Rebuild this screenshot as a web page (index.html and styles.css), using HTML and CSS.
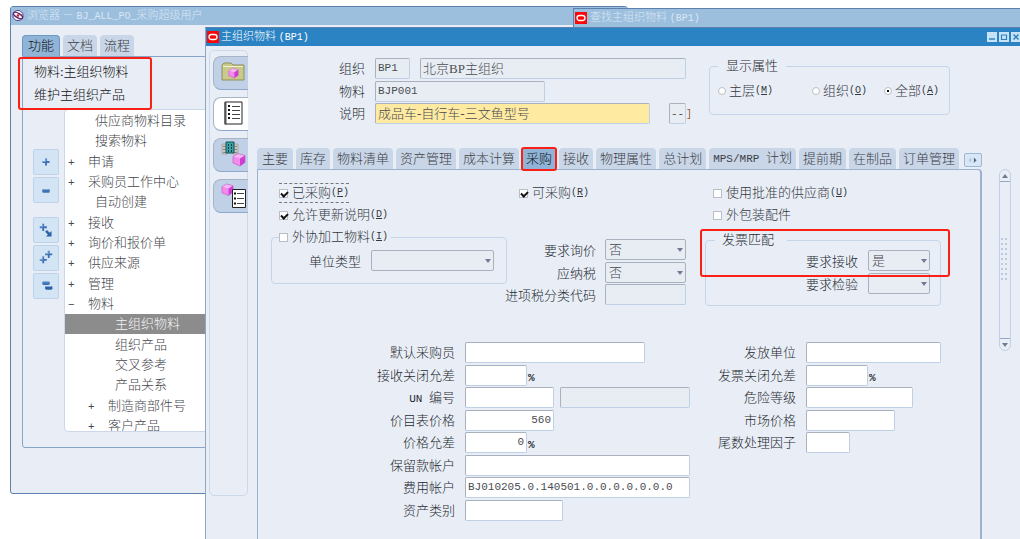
FILE: index.html
```html
<!DOCTYPE html>
<html lang="zh-CN">
<head>
<meta charset="utf-8">
<title>主组织物料 (BP1)</title>
<link rel="stylesheet" href="styles.css">
</head>
<body>
<svg class="defs" aria-hidden="true">
  <defs>
    <symbol id="cube" viewBox="0 0 14 14"><path d="M1 4 6 1l7 2-5 3z" fill="#fbb4f6"/><path d="M1 4l7 2v7.500L1 10.500z" fill="#f58aee"/><path d="M8 6l5-3v7l-5 3.500z" fill="#d03cd4"/><path d="M1 4 6 1l7 2v7l-5 3.500L1 10.500z" fill="none" stroke="#c050c4" stroke-width=".6"/></symbol>
    <symbol id="plus" viewBox="0 0 8 8"><path d="M3 0h2v3h3v2H5v3H3V5H0V3h3z" fill="#3f70b5"/><path d="M3.500 .5v3h-3" fill="none" stroke="#7da8dc"/></symbol>
    <symbol id="oracle" viewBox="0 0 12 12"><path d="M0 0h12v12H0z" fill="#f80808"/><rect x="2" y="3.500" width="8" height="5" rx="2.500" fill="none" stroke="#fff" stroke-width="1.300"/></symbol>
  </defs>
</svg>
<div class="desktop">
  <section class="window nav-window">
    <header class="title muted">
      <svg class="logo round" viewBox="0 0 13 13"><circle cx="6.500" cy="6" r="5.500" fill="#fff" stroke="#4a3a80"/><ellipse cx="6.500" cy="6" rx="5.500" ry="2.400" transform="rotate(30 6.500 6)" fill="none" stroke="#64246c" stroke-width="1.500"/><circle cx="6.500" cy="6" r="1.400" fill="#c22"/></svg>
      <span>浏览器 － <span class="en">BJ_ALL_PO_</span>采购超级用户</span>
    </header>
    <div class="nav-body">
      <div class="tabs nav-tabs"><button class="tab active">功能</button><button class="tab">文档</button><button class="tab">流程</button></div>
      <div class="nav-panel">
        <div class="nav-heading"><div>物料:主组织物料</div><div>维护主组织产品</div><i class="mark mark-nav"></i></div>
        <div class="nav-main">
          <div class="tools">
            <button class="tool" aria-label="展开"><svg viewBox="0 0 26 26"><use href="#plus" x="9" y="9" width="8" height="8"/></svg></button>
            <button class="tool" aria-label="折叠"><svg viewBox="0 0 26 26"><rect x="9" y="12" width="8" height="4" rx="1" fill="#3f70b5"/><path d="M10 12.500h6" stroke="#8db4e0"/></svg></button>
            <button class="tool apart" aria-label="展开分支"><svg viewBox="0 0 26 26"><use href="#plus" x="6" y="6" width="8" height="8"/><path d="M14 13l3 3 2-2v6h-6l2-2-3-3z" fill="#2f61a8"/></svg></button>
            <button class="tool" aria-label="全部展开"><svg viewBox="0 0 26 26"><use href="#plus" x="6" y="11" width="8" height="8"/><use href="#plus" x="12" y="5" width="8" height="8"/></svg></button>
            <button class="tool" aria-label="全部折叠"><svg viewBox="0 0 26 26"><rect x="9" y="8" width="8" height="4" rx="1.500" fill="#3f70b5"/><rect x="12" y="13" width="8" height="4" rx="1.500" fill="#2f61a8"/><path d="M10 8.500h6M13 13.500h6" stroke="#8db4e0"/></svg></button>
          </div>
          <ul class="tree">
            <li class="leaf">供应商物料目录</li>
            <li class="leaf">搜索物料</li>
            <li><b>+</b>申请</li>
            <li><b>+</b>采购员工作中心</li>
            <li class="leaf">自动创建</li>
            <li><b>+</b>接收</li>
            <li><b>+</b>询价和报价单</li>
            <li><b>+</b>供应来源</li>
            <li><b>+</b>管理</li>
            <li><b>−</b>物料</li>
            <li class="deep selected">主组织物料</li>
            <li class="deep">组织产品</li>
            <li class="deep">交叉参考</li>
            <li class="deep">产品关系</li>
            <li class="nested"><b>+</b>制造商部件号</li>
            <li class="nested"><b>+</b>客户产品</li>
          </ul>
        </div>
      </div>
    </div>
  </section>

  <section class="window find-window">
    <header class="title muted"><svg class="logo" viewBox="0 0 12 12"><use href="#oracle"/></svg><span>查找主组织物料 <span class="en">(BP1)</span></span></header>
  </section>

  <section class="window main-window">
    <header class="title">
      <svg class="logo" viewBox="0 0 12 12"><use href="#oracle"/></svg><span class="caption">主组织物料 <span class="en">(BP1)</span></span>
      <button class="win" aria-label="最小化"><svg viewBox="0 0 10 10"><path d="M2 7h6" stroke="#2c83c4" stroke-width="1.500"/></svg></button>
      <button class="win" aria-label="最大化"><svg viewBox="0 0 10 10"><path d="M2.500 3h5v4.500h-5z" fill="none" stroke="#2c83c4" stroke-width="1.200"/></svg></button>
      <button class="win" aria-label="关闭"><svg viewBox="0 0 10 10"><path d="M2.500 2.500l5 5m0-5l-5 5" stroke="#2c83c4" stroke-width="1.500"/></svg></button>
    </header>
    <div class="main-body">
      <nav class="rail">
        <button class="rail-tab" aria-label="物料文件夹"><svg viewBox="0 0 34 34"><path d="M8 9l2-2h7l2 2h11v15H8z" fill="#c9c98e" stroke="#8f8f58"/><path d="M9 10.500h20" stroke="#f0f0c8"/><use href="#cube" x="14" y="11" width="11" height="12"/></svg></button>
        <button class="rail-tab on" aria-label="列表"><svg viewBox="0 0 34 34"><path d="M11 5h17v22H11z" fill="#fff" stroke="#222"/><path d="M11.500 5v22.500" fill="none" stroke="#555" stroke-width="2"/><path d="M14 9.500h2m-2 4h2m-2 4h2m-2 4h2" transform="translate(0 0)" fill="none"/><path d="M14 9h2M14 13h2M14 17h2M14 21h2" stroke="#111" stroke-width="2"/><path d="M18 9.500h8M18 13.500h8M18 17.500h8M18 21.500h8" stroke="#444"/></svg></button>
        <button class="rail-tab" aria-label="组织物料"><svg viewBox="0 0 34 34"><path d="M8 6h5v10H8zM19 6h5v10h-5z" fill="#c8c8c0" stroke="#aaa"/><path d="M9 8.500h3M9 11.500h3M9 14.500h3M20 8.500h3M20 11.500h3M20 14.500h3" stroke="#888"/><path d="M12 4h8v11h-8z" fill="#3aa3a5" stroke="#174f57"/><path d="M14.500 6v8M17.500 6v8" stroke="#103d48" stroke-dasharray="2 1"/><use href="#cube" x="18" y="14" width="14" height="15"/></svg></button>
        <button class="rail-tab" aria-label="物料清单"><svg viewBox="0 0 34 34"><use href="#cube" x="7" y="3" width="13" height="15"/><path d="M18.500 10.500h13v18h-13z" fill="#fff" stroke="#222"/><path d="M20 14.500h2M20 19.500h2M20 24.500h2" stroke="#111" stroke-width="2"/><path d="M23 14.500h7M23 19.500h7M23 24.500h7" stroke="#444"/></svg></button>
      </nav>
      <div class="content">
        <div class="head">
          <div class="rows head-rows">
            <label for="org">组织</label><div class="fields"><input id="org" class="ro w35 code" value="BP1" readonly><input aria-label="组织名称" class="ro w266" value="北京BP主组织" readonly></div>
            <label for="item">物料</label><div class="fields"><input id="item" class="ro w170 code" value="BJP001" readonly></div>
            <label for="desc">说明</label><div class="fields wide"><input id="desc" class="hot w275" value="成品车-自行车-三文鱼型号"><span class="flex-end"><input aria-label="弹性域" class="ro w18 code" value="--" readonly><span class="en bracket">]</span></span></div>
          </div>
          <fieldset class="show">
            <legend>显示属性</legend>
            <div class="radios">
              <label class="choice"><input type="radio" name="show">主层<span class="en">(<u>M</u>)</span></label>
              <label class="choice"><input type="radio" name="show">组织<span class="en">(<u>O</u>)</span></label>
              <label class="choice"><input type="radio" name="show" checked>全部<span class="en">(<u>A</u>)</span></label>
            </div>
          </fieldset>
        </div>
        <div class="tabs">
          <button class="tab first">主要</button><button class="tab">库存</button><button class="tab">物料清单</button><button class="tab">资产管理</button><button class="tab">成本计算</button><button class="tab active">采购<i class="mark mark-tab"></i></button><button class="tab">接收</button><button class="tab">物理属性</button><button class="tab">总计划</button><button class="tab"><span class="en large">MPS/MRP </span>计划</button><button class="tab">提前期</button><button class="tab">在制品</button><button class="tab">订单管理</button>
          <button class="more" aria-label="更多标签"><svg viewBox="0 0 18 14"><path d="M7 4v6L4 7z" fill="#b4c4dc"/><path d="M10 4v6l3-3z" fill="#56637f"/></svg></button>
        </div>
        <div class="split">
          <div class="panel">
            <div class="upper">
              <div class="col">
                <label class="choice inset focus"><input type="checkbox" checked>已采购<span class="en">(<u>P</u>)</span></label>
                <label class="choice inset"><input type="checkbox" checked>允许更新说明<span class="en">(<u>D</u>)</span></label>
                <fieldset class="outside">
                  <legend><label class="choice"><input type="checkbox">外协加工物料<span class="en">(<u>I</u>)</span></label></legend>
                  <label for="unit">单位类型</label><span class="select w123"><select id="unit"><option></option></select></span>
                </fieldset>
              </div>
              <div class="col middle">
                <label class="choice inset"><input type="checkbox" checked>可采购<span class="en">(<u>R</u>)</span></label>
                <div class="rows tax">
                  <label for="rfq">要求询价</label><span class="select w81"><select id="rfq"><option>否</option></select></span>
                  <label for="taxable">应纳税</label><span class="select w81"><select id="taxable"><option>否</option></select></span>
                  <label for="taxcode">进项税分类代码</label><input id="taxcode" class="ro w81" readonly>
                </div>
              </div>
              <div class="col">
                <label class="choice inset"><input type="checkbox">使用批准的供应商<span class="en">(<u>U</u>)</span></label>
                <label class="choice inset"><input type="checkbox">外包装配件</label>
                <div class="match-wrap">
                  <fieldset class="match">
                    <legend>发票匹配</legend>
                    <div class="rows match-rows">
                      <label for="receipt">要求接收</label><span class="select w62"><select id="receipt"><option>是</option></select></span>
                      <label for="inspect">要求检验</label><span class="select w62"><select id="inspect"><option></option></select></span>
                    </div>
                  </fieldset>
                  <i class="mark mark-match"></i>
                </div>
              </div>
            </div>
            <div class="lower">
              <div class="rows left-rows">
                <label for="buyer">默认采购员</label><div class="fields"><input id="buyer" class="w180"></div>
                <label for="rtol">接收关闭允差</label><div class="fields pct"><input id="rtol" class="w62"><span>%</span></div>
                <label for="un"><span class="en large">UN </span>编号</label><div class="fields un"><input id="un" class="w89"><input aria-label="UN 编号说明" class="ro w130" readonly></div>
                <label for="price">价目表价格</label><div class="fields"><input id="price" class="w89 code num" value="560"></div>
                <label for="ptol">价格允差</label><div class="fields pct"><input id="ptol" class="w62 code num" value="0"><span>%</span></div>
                <label for="enc">保留款帐户</label><div class="fields"><input id="enc" class="w225"></div>
                <label for="exp">费用帐户</label><div class="fields"><input id="exp" class="w225 code" value="BJ010205.0.140501.0.0.0.0.0.0.0"></div>
                <label for="asset">资产类别</label><div class="fields"><input id="asset" class="w98"></div>
              </div>
              <div class="rows right-rows">
                <label for="uoi">发放单位</label><div class="fields"><input id="uoi" class="w135"></div>
                <label for="itol">发票关闭允差</label><div class="fields pct"><input id="itol" class="w62"><span>%</span></div>
                <label for="hazard">危险等级</label><div class="fields"><input id="hazard" class="w107"></div>
                <label for="market">市场价格</label><div class="fields"><input id="market" class="w89"></div>
                <label for="round">尾数处理因子</label><div class="fields"><input id="round" class="w44"></div>
              </div>
            </div>
          </div>
          <div class="scroll"><button class="up" aria-label="向上"></button><span class="grip"></span><button class="down" aria-label="向下"></button></div>
        </div>
      </div>
    </div>
  </section>
</div>
</body>
</html>
```
FILE: styles.css
```css
* { box-sizing: border-box; }
body { margin: 0; background: #fff; color: #262a30; font: 300 13px/20px "Liberation Serif", "Noto Sans CJK SC", sans-serif; }
button, input, select { margin: 0; padding: 0; border: 0; background: none; color: inherit; font: inherit; }
fieldset { margin: 0; padding: 0; min-width: 0; border: 1px solid #c5d5e9; border-radius: 4px; }
legend { padding: 0; }
svg { display: block; }
.defs { position: absolute; width: 0; height: 0; }
.en { font-family: "Liberation Mono", monospace; font-size: 10px; white-space: pre; }
.en.large { font-size: 11px; }
.code { font-family: "Liberation Mono", monospace; font-size: 11px; }
.desktop { position: relative; height: 100vh; min-height: 539px; overflow: hidden; }
.window { position: absolute; background: #e9eef6; border: 1px solid #5e80ad; }
.nav-window { left: 10px; top: 6px; width: 618px; height: 488px; border-radius: 3px; }
.find-window { left: 573px; right: -2px; top: 8px; height: 60px; }
.main-window { left: 205px; right: -2px; top: 27px; bottom: -1px; display: flex; flex-direction: column; border-left-color: #8ea5c4; }
.title { display: flex; align-items: center; gap: 3px; height: 18px; padding: 0 1px; background: #2c83c4; color: #fff; font-size: 11px; line-height: 18px; white-space: nowrap; }
.title.muted { background: #9dbfde; color: #d9e6f3; }
.logo { width: 12px; height: 12px; flex: none; }
.caption { flex: 1; }
.win { width: 10px; height: 10px; background: #c8e3f6; }
.main-window .title { gap: 2px; padding-right: 0; }

.nav-body { padding: 10px 11px; }
.tabs { display: flex; align-items: flex-end; gap: 3px; }
.tab { position: relative; flex: none; height: 21px; padding: 0 4px; background: #c9d6e8; border-radius: 4px 4px 0 0; color: #3c4046; line-height: 20px; white-space: nowrap; }
.tab.first { padding: 0 5px; }
.tab.active { background: #8fb4d8; color: #111; }
.nav-tabs .active { padding: 0 5px; border: 1px solid #6e98c4; border-bottom: 0; }
.nav-panel { height: 392px; border: 1px solid #87a5c8; border-radius: 0 0 3px 3px; }
.nav-heading { position: relative; padding: 3px 11px; line-height: 23px; color: #111; }
.nav-main { display: flex; gap: 5px; padding-left: 10px; }
.tools { display: flex; flex-direction: column; gap: 2px; padding-top: 40px; }
.tool { width: 26px; height: 26px; border: 1px solid #bcd3ea; border-radius: 2px; background: #d3e4f4; }
.tool.apart { margin-top: 12px; }
.tree { flex: 1; height: 323px; margin: 0; padding: 1px 0 0; overflow: hidden; list-style: none; background: #fff; border: 1px solid #cbd8ea; border-radius: 4px; color: #44474c; display: grid; grid-template-rows: repeat(6, 20px 20px 21px); align-items: center; }
.tree li { padding-left: 3px; white-space: nowrap; }
.tree b { display: inline-block; width: 20px; font: 11px/12px "Liberation Mono", monospace; }
.tree .leaf { padding-left: 30px; }
.tree .deep { padding-left: 50px; }
.tree .nested { padding-left: 23px; }
.tree .selected { align-self: stretch; background: #8c8c8c; color: #f4f4f4; }

.main-body { display: flex; flex: 1; min-height: 0; padding-left: 3px; }
.rail { width: 39px; height: 446px; margin-top: 4px; padding: 5px 0 0 3px; display: flex; flex-direction: column; gap: 7px; border: 1px solid #cbd9ea; border-radius: 5px; flex: none; }
.rail-tab { width: 35px; height: 34px; background: #c0d1e7; border: 1px solid #a8b4c4; border-right: 0; border-bottom-color: #8da8cb; border-radius: 8px 0 0 8px; }
.rail-tab.on { background: #fff; }
.rail-tab svg { width: 34px; height: 34px; margin-top: -1px; }
.content { flex: 1; min-width: 0; display: flex; flex-direction: column; gap: 22px; padding: 12px 10px 0 9px; }
.head { display: flex; justify-content: space-between; align-items: flex-start; padding-right: 61px; }
.rows { display: grid; column-gap: 10px; }
.rows > label { text-align: right; line-height: 21px; white-space: nowrap; }
.head-rows { grid-template-columns: 108px auto; grid-template-rows: 23px 22px 23px; }
.fields { display: flex; align-items: flex-start; gap: 10px; }
.wide { justify-content: space-between; }
.flex-end { display: flex; }
.bracket { width: 0; color: #a05030; line-height: 24px; }
input:not([type]) { height: 21px; padding: 0 2px 2px; border: 1px solid #bfd0e6; border-top-color: #a9b1be; border-left-color: #a9b1be; border-radius: 2px; background: #fff; color: #4a4d52; }
input.ro:not([type]) { background: #e8edf4; }
input.hot:not([type]) { background: #ffeaa2; }
input.num { text-align: right; }
input.w18:not([type]) { padding: 0 1px; }
.w18 { width: 17px; } .w35 { width: 35px; } .w44 { width: 44px; } .w62 { width: 62px; } .w81 { width: 81px; } .w89 { width: 89px; }
.w98 { width: 98px; } .w107 { width: 107px; } .w123 { width: 123px; } .w130 { width: 130px; } .w135 { width: 135px; }
.w170 { width: 170px; } .w180 { width: 180px; } .w225 { width: 225px; } .w266 { width: 266px; } .w275 { width: 275px; }
.show { width: 241px; height: 59px; margin-top: -2px; }
.show legend { height: 20px; margin-left: 8px; padding: 0 8px; }
.radios { display: grid; grid-template-columns: 94px 72px auto; padding: 4px 0 0 8px; }
.choice { display: flex; align-items: center; color: #34383e; white-space: nowrap; height: 22px; }
.inset { margin-left: 8px; }
.choice input { appearance: none; position: relative; flex: none; width: 9px; height: 9px; margin-right: 4px; background: #fff; border: 1px solid #b9bec6; }
.choice input[type=radio] { width: 8px; height: 8px; margin-right: 3px; border-radius: 50%; }
.choice input[type=radio]:checked::after { content: ""; position: absolute; left: 2px; top: 2px; width: 2px; height: 2px; background: #111; }
.choice input[type=checkbox]:checked::after { content: ""; position: absolute; left: 1px; top: 1px; width: 5px; height: 3px; border: solid #111; border-width: 0 0 2px 2px; transform: rotate(-45deg); }
.focus { align-self: flex-start; height: 20px; margin-top: 1px; margin-bottom: 1px; border: dashed #777; border-width: 1px 0; }
.more { flex: none; width: 18px; height: 14px; margin: 0 0 2px 2px; background: #d8e7f6; border: 1px solid #9db6d4; border-radius: 2px; }
.split { display: flex; flex: 1; margin-top: -22px; justify-content: space-between; gap: 17px; min-height: 0; }
.panel { flex: 1; min-width: 0; padding: 12px 39px 0 13px; border: solid #9bb2cf; border-width: 1px 2px 0 1px; border-radius: 0 4px 0 0; }
.upper { display: grid; grid-template-columns: 234px minmax(0, 1fr) 236px; }
.col { display: flex; flex-direction: column; }
.middle { padding-right: 19px; }
.middle .inset { margin-left: 14px; }
.outside { display: flex; gap: 10px; padding: 2px 12px 11px; justify-content: flex-end; height: 58px; margin-right: -2px; }
.outside legend { margin-left: -5px; padding-right: 3px; }
.outside > label { line-height: 23px; }
.select { position: relative; display: block; height: 21px; }
.select::after { content: ""; position: absolute; right: 3px; top: 9px; border: solid transparent; border-width: 4px 3px 0; border-top-color: #727b91; pointer-events: none; }
.select select { appearance: none; width: 100%; height: 21px; padding: 0 3px 2px; border: 1px solid #a9b1be; border-radius: 2px; background: #e8edf4; color: #44474c; }
.tax { grid-template: 23px 22px 23px / 1fr auto; column-gap: 9px; margin-top: 35px; }
.tax > label, .match-rows > label { line-height: 23px; }
.match-wrap { position: relative; margin-top: 4px; }
.match { height: 76px; }
.match legend { height: 20px; margin-left: 9px; padding: 0 13px 0 7px; }
.match-rows { grid-template: 23px 22px / 1fr auto; padding-right: 10px; }
.lower { display: flex; justify-content: space-between; margin-top: 35px; }
.left-rows { grid-template-columns: 184px auto; grid-template-rows: repeat(4, 23px 22px); }
.right-rows { grid-template-columns: auto auto; grid-template-rows: 23px 22px 23px 22px 23px; align-content: start; }
.pct { gap: 1px; }
.pct span { font: bold 11px/26px "Liberation Mono", monospace; }
.un { gap: 6px; }
.scroll { width: 12px; height: 182px; display: flex; flex-direction: column; align-items: center; border: 1px solid #c0d0e6; border-radius: 6px; flex: none; }
.scroll button { position: relative; width: 10px; height: 12px; flex: none; }
.up { border-bottom: 1px solid #96a9c4; }
.down { border-top: 1px solid #96a9c4; }
.scroll button::after { content: ""; position: absolute; left: 2px; top: 4px; border: solid transparent; border-width: 0 3px 4px; border-bottom-color: #727b91; }
.scroll .up { border-bottom: 1px solid #96a9c4; }
.scroll .down { border-top: 1px solid #96a9c4; }
.scroll .down::after { border-width: 4px 3px 0; border-top-color: #727b91; }
.grip { width: 8px; height: 45px; margin: auto; background: radial-gradient(circle at 1px 1px, #bccbe0 1px, transparent 1px) 0 0 / 4px 5px; }

.mark { position: absolute; border: 2px solid #fb2015; border-radius: 3px; pointer-events: none; }
.mark-nav { left: -5px; top: 0; width: 134px; height: 53px; }
.mark-tab { inset: -1px -1px -2px; }
.mark-match { left: -5px; right: -9px; top: -1px; height: 48px; }
```
